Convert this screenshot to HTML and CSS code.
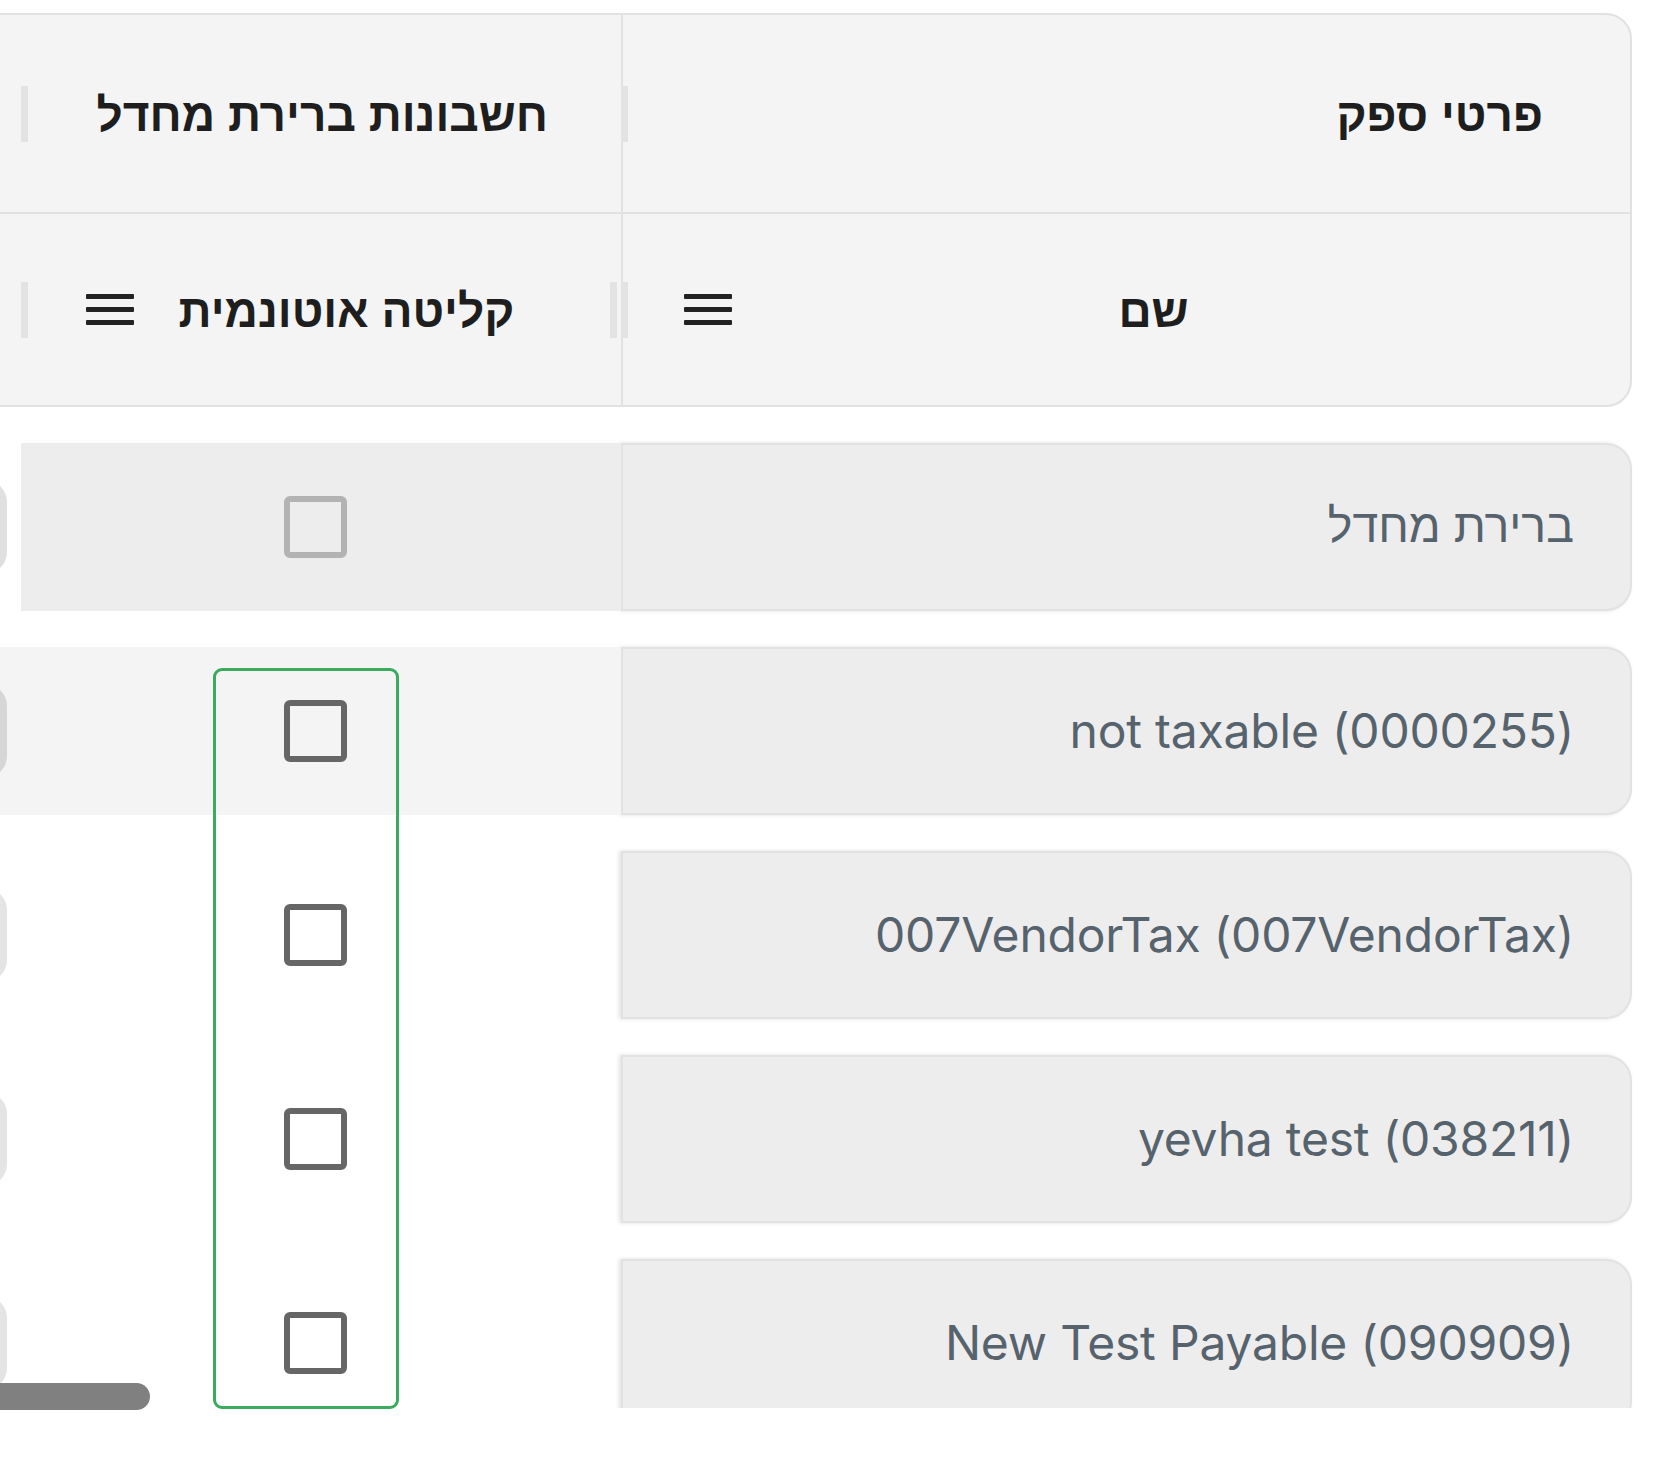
FILE: index.html
```html
<!DOCTYPE html>
<html lang="he" dir="rtl">
<head>
<meta charset="utf-8">
<title>ספקים</title>
<link rel="stylesheet" href="styles.css">
</head>
<body>
<div class="grid">
  <div class="header">
    <div class="hrow hrow-group">
      <div class="hcell hcell-name group-name">
        <span class="hlabel">פרטי ספק</span>
        <span class="handle handle-name"></span>
      </div>
      <div class="hcell hcell-check group-check">
        <span class="hlabel">חשבונות ברירת מחדל</span>
        <span class="handle handle-left"></span>
      </div>
      <div class="hcell hcell-more"></div>
    </div>
    <div class="hrow hrow-cols">
      <div class="hcell hcell-name col-name">
        <span class="hlabel hlabel-center">שם</span>
        <svg class="menu-icon" viewBox="0 0 48 32" width="48" height="32"><rect x="0" y="0" width="48" height="5" rx="1"/><rect x="0" y="13" width="48" height="5" rx="1"/><rect x="0" y="26" width="48" height="5" rx="1"/></svg>
        <span class="handle handle-name"></span>
      </div>
      <div class="hcell hcell-check col-check">
        <span class="hlabel hlabel-center">קליטה אוטונמית</span>
        <svg class="menu-icon" viewBox="0 0 48 32" width="48" height="32"><rect x="0" y="0" width="48" height="5" rx="1"/><rect x="0" y="13" width="48" height="5" rx="1"/><rect x="0" y="26" width="48" height="5" rx="1"/></svg>
        <span class="handle handle-left"></span>
        <span class="handle handle-right"></span>
      </div>
      <div class="hcell hcell-more"></div>
    </div>
  </div>

  <div class="viewport">
    <div class="row row-disabled">
      <div class="cell-name"><span class="he">ברירת מחדל</span></div>
      <div class="cell-check"><span class="checkbox"></span></div>
      <div class="cell-more"><span class="pill"></span></div>
    </div>
    <div class="row row-hover">
      <div class="cell-name"><span class="en" dir="ltr">not taxable (0000255)</span></div>
      <div class="cell-check"><span class="checkbox"></span></div>
      <div class="cell-more"><span class="pill"></span></div>
    </div>
    <div class="row">
      <div class="cell-name"><span class="en" dir="ltr">007VendorTax (007VendorTax)</span></div>
      <div class="cell-check"><span class="checkbox"></span></div>
      <div class="cell-more"><span class="pill"></span></div>
    </div>
    <div class="row">
      <div class="cell-name"><span class="en" dir="ltr">yevha test (038211)</span></div>
      <div class="cell-check"><span class="checkbox"></span></div>
      <div class="cell-more"><span class="pill"></span></div>
    </div>
    <div class="row">
      <div class="cell-name"><span class="en" dir="ltr">New Test Payable (090909)</span></div>
      <div class="cell-check"><span class="checkbox"></span></div>
      <div class="cell-more"><span class="pill"></span></div>
    </div>
  </div>

  <div class="scroll-thumb"></div>
  <div class="col-highlight"></div>
</div>
</body>
</html>
```

FILE: styles.css
```css
* {
  box-sizing: border-box;
}

html,
body {
  margin: 0;
  padding: 0;
  background: #ffffff;
}

body {
  width: 1679px;
  height: 1472px;
  overflow: hidden;
  font-family: Inter, "Liberation Sans", sans-serif;
}

.grid {
  position: relative;
  height: 1472px;
  overflow: hidden;
  padding-top: 13px;
}

/* ---------- header ---------- */
.header {
  margin: 0 47px 0 -40px;
  border: 2px solid #e1e1e1;
  border-radius: 0 26px 26px 0;
  background: #f4f4f4;
}

.hrow {
  display: flex;
}

.hrow-group {
  height: 199px;
  border-bottom: 2px solid #e1e1e1;
}

.hrow-cols {
  height: 191px;
}

.hcell {
  position: relative;
  display: flex;
  align-items: center;
}

.hcell-name {
  flex: none;
  width: 1009px;
  border-left: 2px solid #e1e1e1;
}

.hcell-check {
  flex: none;
  width: 600px;
}

.hcell-more {
  flex: 1;
}

.hlabel {
  font-family: "Liberation Sans", "DejaVu Sans", sans-serif;
  font-weight: 700;
  font-size: 46px;
  line-height: 1.2;
  color: #1e1e1e;
  white-space: nowrap;
  padding-top: 4px;
}

.hlabel-center {
  flex: 1;
  text-align: center;
}

.group-name {
  padding-right: 87px;
}

.group-check {
  padding-right: 73px;
}

.col-name {
  padding-right: 55px;
  padding-left: 61px;
}

.col-check {
  padding-right: 62px;
  padding-left: 65px;
}

.menu-icon {
  flex: none;
  fill: #222222;
  display: block;
}

.handle {
  position: absolute;
  top: 50%;
  width: 7px;
  height: 56px;
  margin-top: -28px;
  background: #e3e3e3;
}

.handle-name {
  left: -2px;
}

.handle-left {
  left: 0;
}

.handle-right {
  right: 4px;
}

/* ---------- body ---------- */
.viewport {
  height: 1001px;
  overflow: hidden;
  padding-top: 36px;
}

.row {
  display: flex;
  height: 168px;
  margin: 0 47px 36px -40px;
}

.cell-name {
  flex: none;
  width: 1011px;
  display: flex;
  align-items: center;
  padding-right: 56px;
  background: #ededed;
  border: 2px solid #e2e2e2;
  border-radius: 0 26px 26px 0;
  box-shadow: -2px 0 4px rgba(0, 0, 0, 0.12);
  color: #56636d;
  white-space: nowrap;
}

.en {
  font-family: Inter, "Liberation Sans", sans-serif;
  font-size: 48px;
  letter-spacing: -0.2px;
  line-height: 1.2;
}

.he {
  font-family: "Liberation Sans", "DejaVu Sans", sans-serif;
  font-size: 46.5px;
  line-height: 1.2;
}

.cell-check {
  flex: none;
  width: 600px;
  display: flex;
  align-items: center;
  justify-content: center;
  padding-right: 12px;
}

.checkbox {
  display: block;
  width: 63px;
  height: 62px;
  border: 6.5px solid #666666;
  border-radius: 6px;
}

.cell-more {
  flex: 1;
  display: flex;
  align-items: center;
  overflow: hidden;
}

.pill {
  flex: none;
  width: 60px;
  height: 94px;
  margin-right: 14px;
  border-radius: 22px;
  background: #e4e4e4;
}

.row-disabled .cell-check {
  background: #ededed;
}

.row-disabled .checkbox {
  border-color: #b3b3b3;
}

.row-disabled .pill {
  background: #e0e0e0;
}

.row-hover .cell-check,
.row-hover .cell-more {
  background: #f4f4f4;
}

.row-hover .pill {
  background: #d6d6d6;
}

/* ---------- overlays ---------- */
.scroll-thumb {
  position: absolute;
  left: -20px;
  top: 1383px;
  width: 170px;
  height: 27px;
  border-radius: 14px;
  background: #808080;
}

.col-highlight {
  position: absolute;
  left: 213px;
  top: 668px;
  width: 186px;
  height: 741px;
  border: 3px solid #3aaa5c;
  border-radius: 9px;
}
```
